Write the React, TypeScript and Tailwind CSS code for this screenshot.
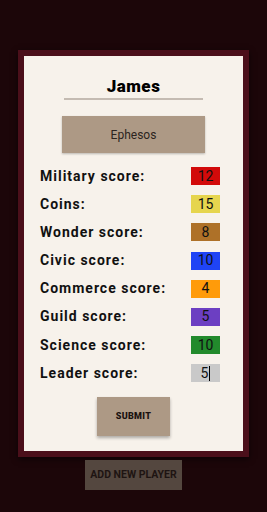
const rows = [
  { label: "Military score:", value: "12", bg: "bg-[#d20a0a]" },
  { label: "Coins:", value: "15", bg: "bg-[#e6d54e]" },
  { label: "Wonder score:", value: "8", bg: "bg-[#ae7128]" },
  { label: "Civic score:", value: "10", bg: "bg-[#1f44f5]" },
  { label: "Commerce score:", value: "4", bg: "bg-[#ff9b0a]" },
  { label: "Guild score:", value: "5", bg: "bg-[#6c3fc2]" },
  { label: "Science score:", value: "10", bg: "bg-[#228a2c]" },
  { label: "Leader score:", value: "5", bg: "bg-[#c9c9c9]" },
];

export default function App() {
  return (
    <div className="w-[267px] h-[512px] bg-[#1c0609] flex flex-col items-center pt-[50px] font-['Roboto',sans-serif]">
      <div className="w-[231px] bg-[#4b0f1a] p-[6px] shadow-[0_2px_6px_rgba(0,0,0,0.6)]">
        <div className="bg-[#f7f2eb] flex flex-col items-center pt-[19px] pb-[15px]">
          <div className="text-[17px] font-black text-black tracking-[0.5px] leading-[22px]">James</div>
          <div className="w-[139px] h-[2px] bg-[#c4bbb2] mt-[1px]" />
          <div className="w-[143px] h-[37px] mt-[16px] bg-[#ad9985] flex items-center justify-center text-[12px] text-[#2b2420] shadow-[0_1px_2px_rgba(0,0,0,0.25)]">
            Ephesos
          </div>
          <div className="w-full flex flex-col gap-[10.2px] mt-[14px] pl-[16px] pr-[23px]">
            {rows.map((r, i) => (
              <div key={r.label} className="flex items-center justify-between h-[18px]">
                <span className="text-[14px] font-bold text-[#111] tracking-[1px]">{r.label}</span>
                <span className={`w-[29px] h-[18px] ${r.bg} flex items-center justify-center text-[14px] text-[#111]`}>
                  {r.value}
                  {i === rows.length - 1 && <span className="inline-block w-[1px] h-[15px] bg-black ml-[1px]" />}
                </span>
              </div>
            ))}
          </div>
          <div className="mt-[15px] w-[73px] h-[39px] bg-[#ad9985] flex items-center justify-center text-[9px] font-black text-[#1a1210] tracking-[0.3px] shadow-[0_2px_3px_rgba(0,0,0,0.3)]">
            SUBMIT
          </div>
        </div>
      </div>
      <div className="mt-[3px] w-[97px] h-[30px] bg-[#54473f] flex items-center justify-center text-[10.5px] font-bold text-[#1e1412] whitespace-nowrap">
        ADD NEW PLAYER
      </div>
    </div>
  );
}
